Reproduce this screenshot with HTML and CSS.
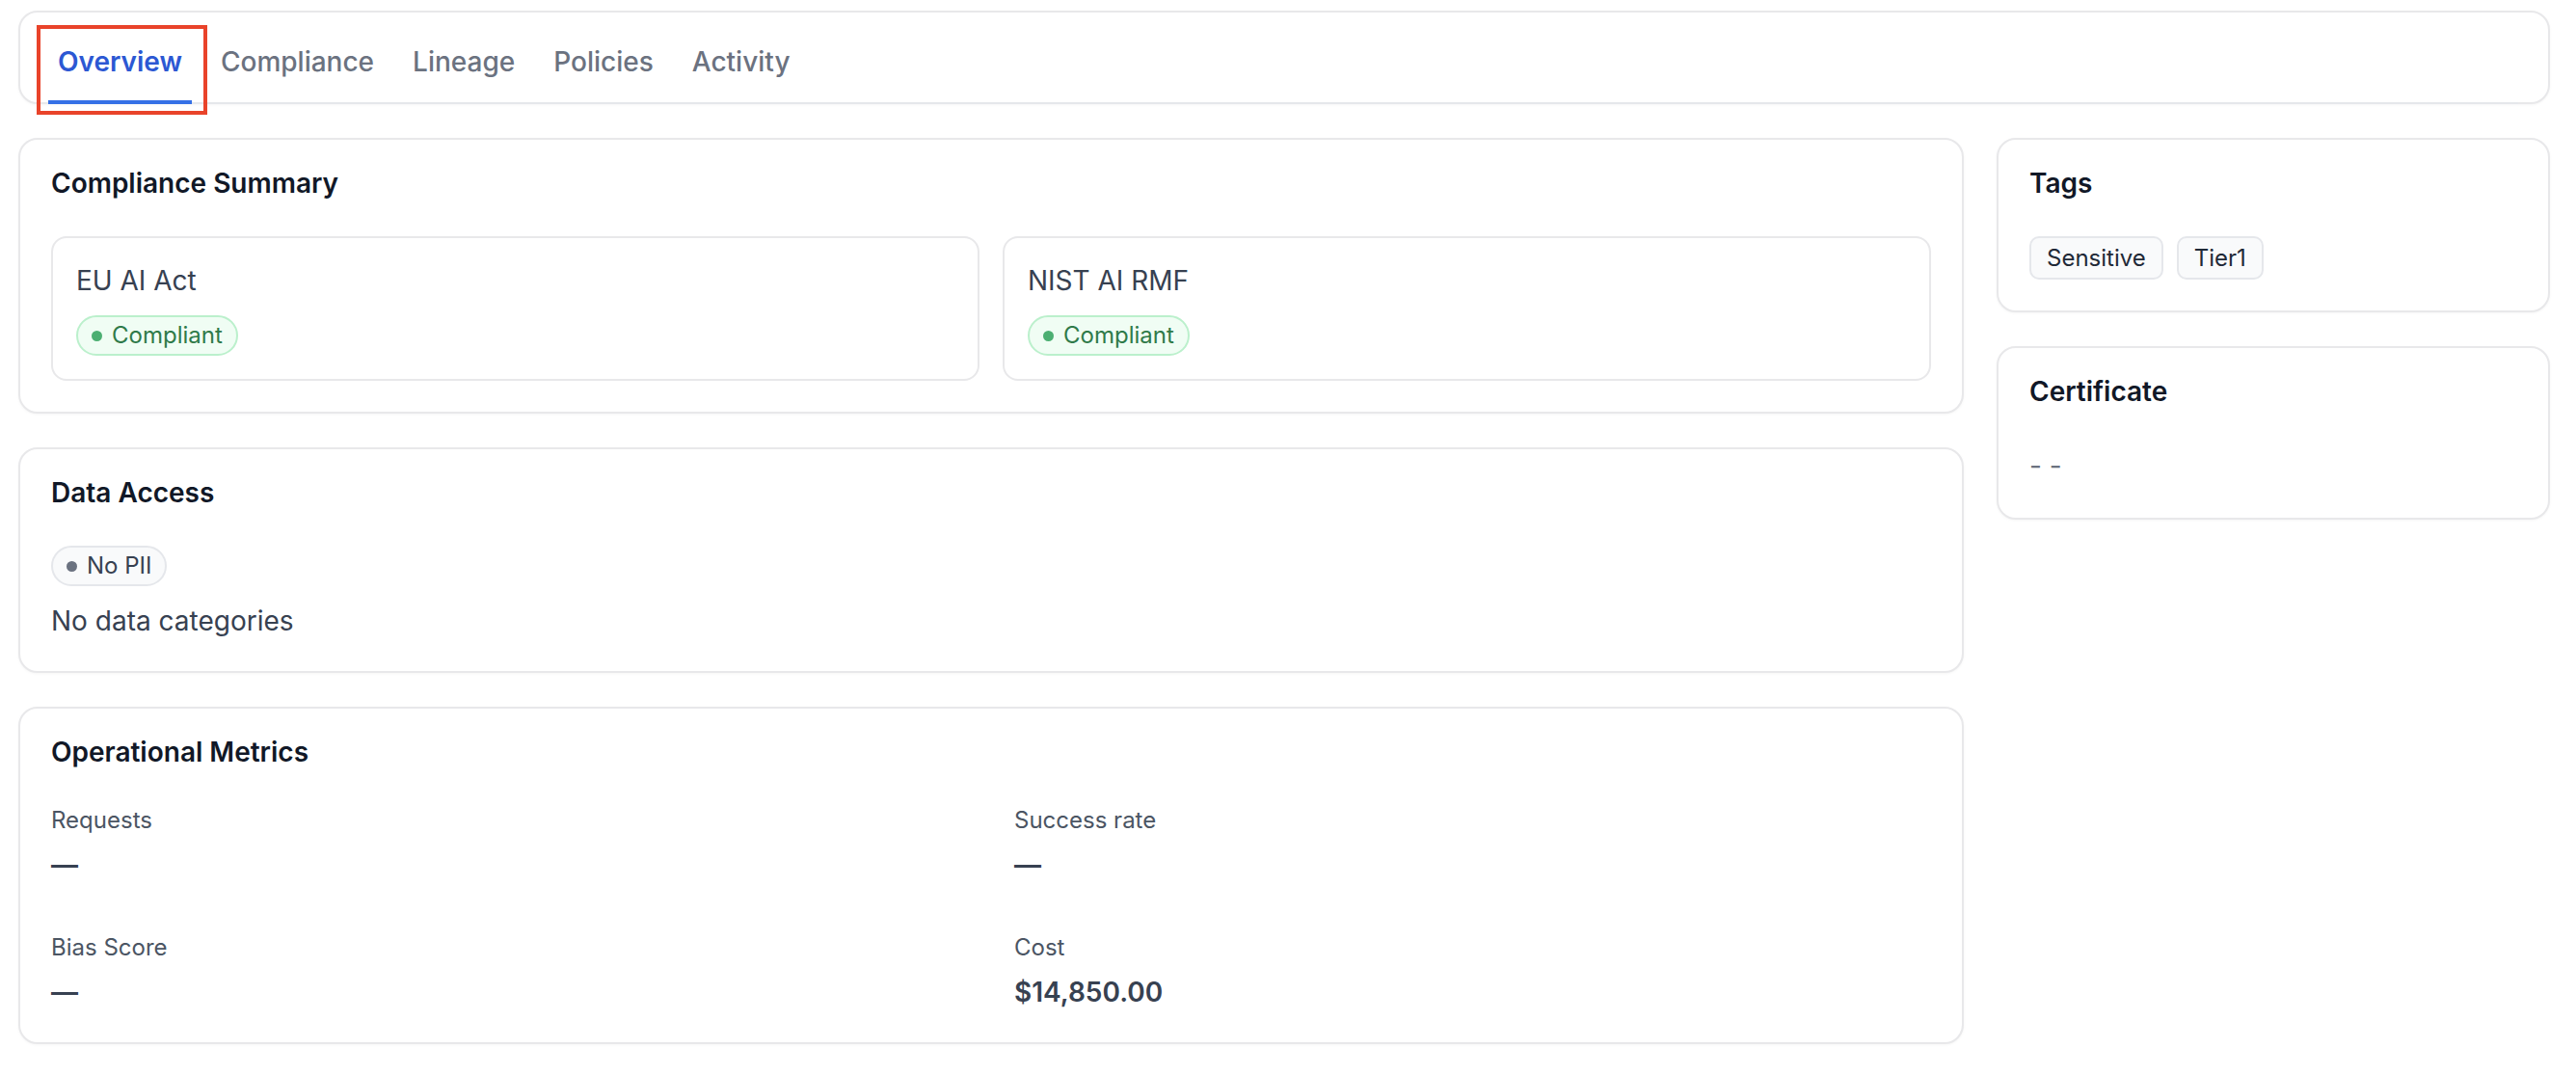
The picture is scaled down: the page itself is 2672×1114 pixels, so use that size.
FILE: index.html
```html
<!DOCTYPE html>
<html lang="en">
<head>
    <meta charset="UTF-8">
    <title>Overview</title>
    <link rel="stylesheet" href="styles.css">
</head>
<body>
<div class="page">
    <div class="tabs-card">
        <ul class="tabs">
            <li class="tab active">Overview<span class="mark"></span></li>
            <li class="tab">Compliance</li>
            <li class="tab">Lineage</li>
            <li class="tab">Policies</li>
            <li class="tab">Activity</li>
        </ul>
    </div>

    <div class="layout">
        <div class="col">
            <div class="card">
                <h3 class="card-title">Compliance Summary</h3>
                <div class="frameworks">
                    <div class="fw">
                        <div class="fw-name">EU AI Act</div>
                        <span class="badge ok"><i class="dot"></i>Compliant</span>
                    </div>
                    <div class="fw">
                        <div class="fw-name">NIST AI RMF</div>
                        <span class="badge ok"><i class="dot"></i>Compliant</span>
                    </div>
                </div>
            </div>

            <div class="card">
                <h3 class="card-title">Data Access</h3>
                <span class="badge muted"><i class="dot"></i>No PII</span>
                <p class="note">No data categories</p>
            </div>

            <div class="card">
                <h3 class="card-title">Operational Metrics</h3>
                <div class="metrics">
                    <div class="metric">
                        <div class="metric-label">Requests</div>
                        <div class="metric-value">&mdash;</div>
                    </div>
                    <div class="metric">
                        <div class="metric-label">Success rate</div>
                        <div class="metric-value">&mdash;</div>
                    </div>
                    <div class="metric">
                        <div class="metric-label">Bias Score</div>
                        <div class="metric-value">&mdash;</div>
                    </div>
                    <div class="metric">
                        <div class="metric-label">Cost</div>
                        <div class="metric-value">$14,850.00</div>
                    </div>
                </div>
            </div>
        </div>

        <div class="col">
            <div class="card">
                <h3 class="card-title">Tags</h3>
                <div class="tags">
                    <span class="tag">Sensitive</span>
                    <span class="tag">Tier1</span>
                </div>
            </div>
            <div class="card">
                <h3 class="card-title">Certificate</h3>
                <div class="empty">- -</div>
            </div>
        </div>
    </div>
</div>
</body>
</html>
```

FILE: styles.css
```css
* {
    margin: 0;
    padding: 0;
    box-sizing: border-box;
}

ul {
    list-style: none;
}

body {
    font-family: Inter, "Noto Sans", "Liberation Sans", sans-serif;
    background-color: #fff;
    color: #111827;
}

.page {
    padding: 11px 27px 40px 19px;
}

/* tab bar */
.tabs-card {
    border: 2px solid #e8e8ea;
    border-radius: 20px;
    padding: 0 31px 0 29px;
    background-color: #fff;
    box-shadow: 0 1px 3px rgba(0, 0, 0, 0.04);
}

.tabs {
    display: flex;
    gap: 20px;
    border-bottom: 2px solid #e5e7eb;
    margin-bottom: -2px;
}

.tab {
    position: relative;
    padding: 31px 10px 20px;
    margin-bottom: -2px;
    font-size: 28px;
    line-height: 40px;
    font-weight: 500;
    color: #6b7280;
    border-bottom: 4px solid transparent;
    cursor: pointer;
}

.tab.active {
    color: #2c58d3;
    font-weight: 600;
    border-bottom-color: #3570e6;
}

/* red highlight box round the active tab */
.mark {
    position: absolute;
    left: -12px;
    right: -16px;
    top: 13px;
    bottom: -15px;
    border: 4px solid #e9432a;
}

/* columns */
.layout {
    display: grid;
    grid-template-columns: 1fr 574px;
    column-gap: 34px;
    margin-top: 35px;
    align-items: start;
}

.col {
    display: flex;
    flex-direction: column;
    gap: 35px;
}

.card {
    border: 2px solid #e8e8ea;
    border-radius: 20px;
    padding: 32px;
    background-color: #fff;
    box-shadow: 0 1px 3px rgba(0, 0, 0, 0.04);
}

.card-title {
    font-size: 28px;
    line-height: 26px;
    font-weight: 600;
    color: #111827;
    margin-bottom: 42px;
}

/* compliance */
.frameworks {
    display: grid;
    grid-template-columns: 1fr 1fr;
    gap: 24px;
}

.fw {
    border: 2px solid #e8e8ea;
    border-radius: 16px;
    padding: 24px;
}

.fw-name {
    font-size: 28px;
    line-height: 40px;
    color: #374151;
    margin-bottom: 16px;
}

.badge {
    display: inline-flex;
    align-items: center;
    gap: 10px;
    padding: 3px 14px;
    border: 2px solid;
    border-radius: 999px;
    font-size: 24px;
    line-height: 32px;
}

.badge .dot {
    width: 11px;
    height: 11px;
    border-radius: 50%;
}

.badge.ok {
    background-color: #f0fdf4;
    border-color: #bbf0cc;
    color: #2f7a49;
}

.badge.ok .dot {
    background-color: #4caf72;
}

.badge.muted {
    background-color: #f9fafb;
    border-color: #e5e7eb;
    color: #374151;
}

.badge.muted .dot {
    background-color: #6b7280;
}

.note {
    margin-top: 16px;
    font-size: 28px;
    line-height: 40px;
    color: #374151;
}

/* metrics */
.metrics {
    display: grid;
    grid-template-columns: 1fr 1fr;
    column-gap: 48px;
    row-gap: 50px;
}

.metric-label {
    font-size: 24px;
    line-height: 32px;
    color: #4b5563;
}

.metric-value {
    margin-top: 10px;
    font-size: 28px;
    line-height: 40px;
    font-weight: 600;
    color: #374151;
}

/* side */
.tags {
    display: flex;
    gap: 14px;
}

.tag {
    padding: 5px 16px;
    border: 2px solid #e5e7eb;
    border-radius: 10px;
    background-color: #f9fafb;
    font-size: 24px;
    line-height: 31px;
    color: #1f2937;
}

.empty {
    font-size: 28px;
    line-height: 44px;
    color: #6b7280;
}
```
